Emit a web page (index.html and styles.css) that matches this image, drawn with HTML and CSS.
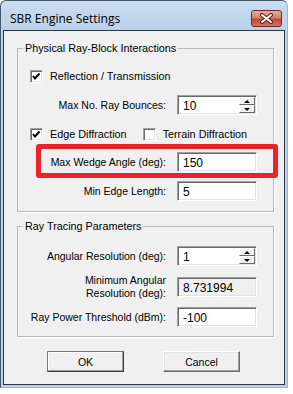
FILE: index.html
```html
<!DOCTYPE html>
<html>
<head>
	<meta charset="utf-8">
	<title>SBR Engine Settings</title>
	<link rel="stylesheet" href="styles.css">
</head>
<body>
	<div class="window">
		<div class="titlebar">
			<span class="title">SBR Engine Settings</span>
			<span class="close">
				<svg width="15" height="11" viewBox="0 0 15 11">
					<path d="M3 2 L12 9 M12 2 L3 9" stroke="#5a1f17" stroke-width="4" stroke-linecap="round"/>
					<path d="M3 2 L12 9 M12 2 L3 9" stroke="#fff" stroke-width="2" stroke-linecap="round"/>
				</svg>
			</span>
		</div>
		<div class="client">
			<fieldset class="group group-physical">
				<legend>Physical Ray-Block Interactions</legend>
				<div class="check-row row-reflection">
					<label class="check">
						<span class="box"><svg width="11" height="11" viewBox="0 0 11 11"><polyline points="2,5 4,7.5 8.5,2.5" fill="none" stroke="#000" stroke-width="1.9"/></svg></span>
						Reflection / Transmission
					</label>
				</div>
				<div class="row row-bounces">
					<span class="label">Max No. Ray Bounces:</span>
					<div class="edit">
						<span class="value">10</span>
						<span class="spinner"><span class="spin up"></span><span class="spin down"></span></span>
					</div>
				</div>
				<div class="check-row row-edge">
					<label class="check">
						<span class="box"><svg width="11" height="11" viewBox="0 0 11 11"><polyline points="2,5 4,7.5 8.5,2.5" fill="none" stroke="#000" stroke-width="1.9"/></svg></span>
						Edge Diffraction
					</label>
					<label class="check">
						<span class="box"></span>
						Terrain Diffraction
					</label>
				</div>
				<div class="highlight">
					<div class="row">
						<span class="label">Max Wedge Angle (deg):</span>
						<div class="edit"><span class="value">150</span></div>
					</div>
				</div>
				<div class="row row-min-edge">
					<span class="label">Min Edge Length:</span>
					<div class="edit"><span class="value">5</span></div>
				</div>
			</fieldset>

			<fieldset class="group group-tracing">
				<legend>Ray Tracing Parameters</legend>
				<div class="row row-angular">
					<span class="label">Angular Resolution (deg):</span>
					<div class="edit">
						<span class="value">1</span>
						<span class="spinner"><span class="spin up"></span><span class="spin down"></span></span>
					</div>
				</div>
				<div class="row row-min-angular">
					<span class="label label-2">Minimum Angular<br>Resolution (deg):</span>
					<div class="edit readonly"><span class="value">8.731994</span></div>
				</div>
				<div class="row row-power">
					<span class="label">Ray Power Threshold (dBm):</span>
					<div class="edit"><span class="value">-100</span></div>
				</div>
			</fieldset>

			<div class="buttons">
				<span class="btn btn-default">OK</span>
				<span class="btn">Cancel</span>
			</div>
		</div>
	</div>
</body>
</html>
```

FILE: styles.css
```css
*{
	margin:0;
	padding:0;
	box-sizing:border-box;
}
body{
	background:#fff;
	font-family:"Liberation Sans",Arial,sans-serif;
	font-size:10.5px;
	color:#000;
}
.window{
	width:288px;
	height:388px;
	display:flex;
	flex-direction:column;
	background:linear-gradient(#c9dcf0,#b9d1ea 30px);
	border:1px solid;
	border-color:#44566a #6cc8ec #6cc8ec #44566a;
	border-radius:6px 6px 0 0;
	padding:0 2px 2px;
}
.titlebar{
	height:29px;
	display:flex;
	justify-content:space-between;
	align-items:flex-start;
	padding:9px 3px 0 7px;
}
.title{
	font-family:"Open Sans","Liberation Sans",sans-serif;
	font-size:12px;
	line-height:17px;
}
.close{
	width:31px;
	height:17px;
	border:1px solid #6a2a22;
	border-radius:3px;
	background:linear-gradient(#eaa99b,#d6806d 45%,#c2462f 55%,#cf7560);
	display:flex;
	align-items:center;
	justify-content:center;
}
.client{
	flex:1;
	background:#f0f0f0;
	border:1px solid #2e3844;
	padding:0 10px 0 13px;
}

/* group boxes */
.group{
	border:1px solid #b9b9b9;
	box-shadow:1px 1px 0 #fff;
	padding:0;
}
.group legend{
	margin-left:5px;
	padding:0 2px;
	line-height:13px;
	font-size:10.8px;
}
.group-physical{
	margin-top:11px;
	padding-bottom:10px;
}
.group-tracing{
	margin-top:8px;
	padding-bottom:9px;
}

/* checkboxes */
.check-row{
	display:flex;
	align-items:center;
	padding-left:12px;
	height:13px;
}
.check{
	display:flex;
	align-items:center;
	gap:7px;
	line-height:13px;
	font-size:10.8px;
}
.check + .check{
	margin-left:16px;
}
.box{
	width:13px;
	height:13px;
	background:#fff;
	border:1px solid;
	border-color:#a0a0a0 #fff #fff #a0a0a0;
	box-shadow:inset 1px 1px 0 #696969,inset -1px -1px 0 #e3e3e3;
	display:flex;
	align-items:center;
	justify-content:center;
}
.row-reflection{margin-top:15px;}
.row-edge{margin-top:13px;}

/* label + field rows */
.row{
	display:flex;
	justify-content:flex-end;
	align-items:center;
	gap:11px;
	padding-right:16px;
}
.label{
	text-align:right;
	line-height:13px;
}
.row-bounces{margin-top:12px;}
.row-min-edge{margin-top:3px;}
.row-angular{margin-top:13px;}
.row-min-angular{margin-top:8px;}
.row-power{margin-top:7px;}

.edit{
	width:80px;
	height:20px;
	display:flex;
	align-items:center;
	background:#fff;
	border:1px solid;
	border-color:#a0a0a0 #fff #fff #a0a0a0;
	box-shadow:inset 1px 1px 0 #696969,inset -1px -1px 0 #e3e3e3;
	padding:1px 1px 1px 5px;
}
.edit .value{
	flex:1;
	font-size:12px;
	padding-top:1px;
}
.edit.readonly{
	background:#f0f0f0;
}
.spinner{
	width:16px;
	height:100%;
	display:flex;
	flex-direction:column;
}
.spin{
	flex:1;
	background:#f0f0f0;
	border:1px solid;
	border-color:#fff #696969 #696969 #fff;
	display:flex;
	align-items:center;
	justify-content:center;
}
.spin::after{
	content:"";
	border-left:3px solid transparent;
	border-right:3px solid transparent;
}
.spin.up::after{border-bottom:3px solid #000;}
.spin.down::after{border-top:3px solid #000;}

/* red annotation frame */
.highlight{
	margin:3px -5px 0 18px;
	border:5px solid #e8232c;
	border-radius:3px;
	padding:3px 0 1px;
}

/* dialog buttons */
.buttons{
	display:flex;
	gap:39px;
	margin-top:14px;
	padding-left:30px;
}
.btn{
	width:77px;
	height:21px;
	display:flex;
	align-items:center;
	justify-content:center;
	background:#f0f0f0;
	border:1px solid;
	border-color:#fff #696969 #696969 #fff;
	box-shadow:inset -1px -1px 0 #a0a0a0,inset 1px 1px 0 #e3e3e3;
}
.btn-default{
	border-color:#7a7a7a #3c3c3c #3c3c3c #7a7a7a;
	box-shadow:inset -1px -1px 0 #a0a0a0,inset 1px 1px 0 #fff;
}
```
